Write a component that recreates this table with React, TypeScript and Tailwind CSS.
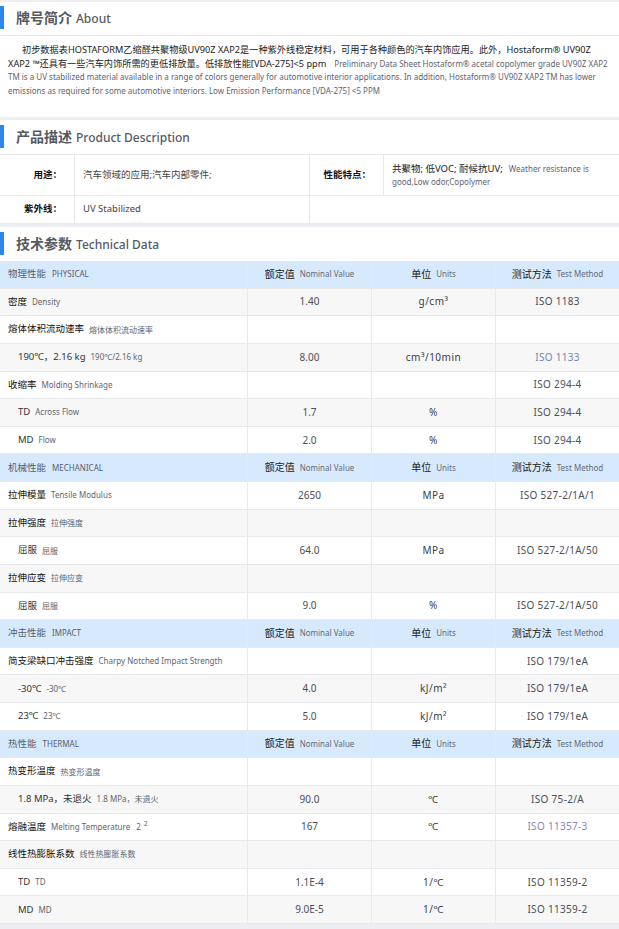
import React from "react";

type HRow = { h: true; zh: string; en: string };
type DRow = {
  h?: false;
  zh: string;
  en: React.ReactNode;
  indent?: boolean;
  v?: string;
  u?: React.ReactNode;
  m?: string;
  link?: "a" | "b";
};
type Row = HRow | DRow;

const rows: Row[] = [
  { h: true, zh: "物理性能", en: "PHYSICAL" },
  { zh: "密度", en: "Density", v: "1.40", u: <>g/cm³</>, m: "ISO 1183" },
  { zh: "熔体体积流动速率", en: "熔体体积流动速率" },
  { zh: "190℃，2.16 kg", en: "190℃/2.16 kg", indent: true, v: "8.00", u: <>cm³/10min</>, m: "ISO 1133", link: "a" },
  { zh: "收缩率", en: "Molding Shrinkage", m: "ISO 294-4" },
  { zh: "TD", en: "Across Flow", indent: true, v: "1.7", u: "%", m: "ISO 294-4" },
  { zh: "MD", en: "Flow", indent: true, v: "2.0", u: "%", m: "ISO 294-4" },
  { h: true, zh: "机械性能", en: "MECHANICAL" },
  { zh: "拉伸模量", en: "Tensile Modulus", v: "2650", u: "MPa", m: "ISO 527-2/1A/1" },
  { zh: "拉伸强度", en: "拉伸强度" },
  { zh: "屈服", en: "屈服", indent: true, v: "64.0", u: "MPa", m: "ISO 527-2/1A/50" },
  { zh: "拉伸应变", en: "拉伸应变" },
  { zh: "屈服", en: "屈服", indent: true, v: "9.0", u: "%", m: "ISO 527-2/1A/50" },
  { h: true, zh: "冲击性能", en: "IMPACT" },
  { zh: "简支梁缺口冲击强度", en: "Charpy Notched Impact Strength", m: "ISO 179/1eA" },
  { zh: "-30℃", en: "-30℃", indent: true, v: "4.0", u: <>kJ/m²</>, m: "ISO 179/1eA" },
  { zh: "23℃", en: "23℃", indent: true, v: "5.0", u: <>kJ/m²</>, m: "ISO 179/1eA" },
  { h: true, zh: "热性能", en: "THERMAL" },
  { zh: "热变形温度", en: "热变形温度" },
  { zh: "1.8 MPa，未退火", en: "1.8 MPa，未退火", indent: true, v: "90.0", u: "℃", m: "ISO 75-2/A" },
  {
    zh: "熔融温度",
    en: (
      <>
        Melting Temperature<span className="ml-[6px]">2</span>
        <sup className="ml-[3px] text-[7px]">2</sup>
      </>
    ),
    v: "167",
    u: "℃",
    m: "ISO 11357-3",
    link: "b",
  },
  { zh: "线性热膨胀系数", en: "线性热膨胀系数" },
  { zh: "TD", en: "TD", indent: true, v: "1.1E-4", u: "1/℃", m: "ISO 11359-2" },
  { zh: "MD", en: "MD", indent: true, v: "9.0E-5", u: "1/℃", m: "ISO 11359-2" },
];

const font = {
  fontFamily: '"Noto Sans", "Noto Sans CJK SC", sans-serif',
};

function SectionHeader({
  zh,
  en,
  border = true,
  h = "h-[35px]",
}: {
  zh: string;
  en: string;
  border?: boolean;
  h?: string;
}) {
  return (
    <div className={`flex ${h} items-center pb-[2px] ${border ? "border-b border-[#e6e8eb]" : ""}`}>
      <div className="h-[23px] w-[4px] bg-[#2f86e8]" />
      <div className="ml-[12px] flex items-baseline text-[#555a63]">
        <span className="text-[14px] font-semibold">{zh}</span>
        <span className="ml-[4px] text-[12px] font-medium">{en}</span>
      </div>
    </div>
  );
}

function DataTable() {
  const cell = "flex items-center border-r border-b border-[#e8e9ec] h-[27.625px]";
  const colHead = (zh: string, en: string) => (
    <>
      <span className="text-[10px] text-[#222]">{zh}</span>
      <span className="ml-[5px] text-[8px] text-[#666b75]">{en}</span>
    </>
  );
  return (
    <div className="grid grid-cols-[248px_124px_124px_123px]">
      {rows.map((r, i) => {
        if (r.h) {
          const hc = `${cell} bg-[#d6e9fd] border-[#e3ecf6]`;
          return (
            <React.Fragment key={i}>
              <div className={`${hc} pl-[8px] text-[#5b606a]`}>
                <span className="text-[9.5px]">{r.zh}</span>
                <span className="ml-[6px] text-[8px]">{r.en}</span>
              </div>
              <div className={`${hc} justify-center`}>{colHead("额定值", "Nominal Value")}</div>
              <div className={`${hc} justify-center`}>{colHead("单位", "Units")}</div>
              <div className={`${hc} justify-center border-r-0`}>{colHead("测试方法", "Test Method")}</div>
            </React.Fragment>
          );
        }
        const bg = i % 2 === 1 ? "bg-[#f7f7f7]" : "bg-white";
        const mColor =
          r.link === "a" ? "text-[#7587ad]" : r.link === "b" ? "text-[#8f84b0]" : "text-[#4a4f58]";
        return (
          <React.Fragment key={i}>
            <div className={`${cell} ${bg} ${r.indent ? "pl-[18px]" : "pl-[8px]"}`}>
              <span className={`text-[9.5px] ${r.indent ? "text-[#333]" : "text-[#111]"}`}>{r.zh}</span>
              <span className="ml-[5px] text-[8px] text-[#5f6470]">{r.en}</span>
            </div>
            <div className={`${cell} ${bg} justify-center text-[10px] text-[#4a4f58]`}>{r.v}</div>
            <div className={`${cell} ${bg} justify-center text-[10px] tracking-[0.5px] text-[#3a3e46]`}>{r.u}</div>
            <div className={`${cell} ${bg} justify-center border-r-0 text-[10px] tracking-[0.3px] ${mColor}`}>
              {r.m}
            </div>
          </React.Fragment>
        );
      })}
    </div>
  );
}

export default function App() {
  const zh = "text-[9.2px] text-[#222]";
  const en = "text-[8px] text-[#5f6470]";
  return (
    <div className="min-h-[929px] w-[619px] bg-[#eceef1] pt-[2px]" style={font}>
      {/* About */}
      <div className="bg-white">
        <SectionHeader zh="牌号简介" en="About" h="h-[34px]" />
        <div className="flex h-[81px] flex-col px-[8px] pt-[7px] text-[8px] leading-[13.7px]">
          <div className="whitespace-nowrap pl-[14px]">
            <span className={zh}>
              初步数据表HOSTAFORM乙缩醛共聚物级UV90Z XAP2是一种紫外线稳定材料，可用于各种颜色的汽车内饰应用。此外，Hostaform® UV90Z
            </span>
          </div>
          <div className="whitespace-nowrap">
            <span className={zh}>XAP2 ™还具有一些汽车内饰所需的更低排放量。低排放性能[VDA-275]&lt;5 ppm</span>
            <span className={`ml-[8px] ${en}`}>
              Preliminary Data Sheet Hostaform® acetal copolymer grade UV90Z XAP2
            </span>
          </div>
          <div className="whitespace-nowrap">
            <span className={en}>
              TM is a UV stabilized material available in a range of colors generally for automotive interior applications. In addition, Hostaform® UV90Z XAP2 TM has lower
            </span>
          </div>
          <div className="whitespace-nowrap">
            <span className={en}>
              emissions as required for some automotive interiors. Low Emission Performance [VDA-275] &lt;5 PPM
            </span>
          </div>
        </div>
      </div>

      {/* Product description */}
      <div className="mt-[3px] bg-white">
        <SectionHeader zh="产品描述" en="Product Description" />
        <div className="grid grid-cols-[75px_235px_74px_235px]">
          <div className="flex h-[41px] items-center justify-end border-r border-b border-[#e8e9ec] pr-[12px] text-[9.5px] font-semibold text-[#111]">
            用途：
          </div>
          <div className="flex h-[41px] items-center border-r border-b border-[#e8e9ec] pl-[8px] text-[9.5px] text-[#444]">
            汽车领域的应用;汽车内部零件;
          </div>
          <div className="flex h-[41px] items-center justify-end border-r border-b border-[#e8e9ec] pr-[12px] text-[9.5px] font-semibold text-[#111]">
            性能特点：
          </div>
          <div className="flex h-[41px] flex-col justify-center gap-[1px] border-b border-[#e8e9ec] pl-[8px]">
            <div className="flex items-center whitespace-nowrap leading-[13px]">
              <span className="text-[9.5px] text-[#222]">共聚物; 低VOC; 耐候抗UV;</span>
              <span className="ml-[6px] text-[8px] text-[#5f6470]">Weather resistance is</span>
            </div>
            <div className="whitespace-nowrap text-[8px] leading-[12px] text-[#5f6470]">
              good,Low odor,Copolymer
            </div>
          </div>
          <div className="flex h-[28px] items-center justify-end border-r border-b border-[#e8e9ec] pr-[12px] text-[9.5px] font-semibold text-[#111]">
            紫外线：
          </div>
          <div className="flex h-[28px] items-center border-r border-b border-[#e8e9ec] pl-[8px] text-[9.5px] text-[#444]">
            UV Stabilized
          </div>
          <div className="col-span-2 h-[28px] border-b border-[#e8e9ec]" />
        </div>
      </div>

      {/* Technical data */}
      <div className="mt-[3px] bg-white">
        <SectionHeader zh="技术参数" en="Technical Data" border={false} h="h-[34px]" />
        <DataTable />
      </div>
    </div>
  );
}
